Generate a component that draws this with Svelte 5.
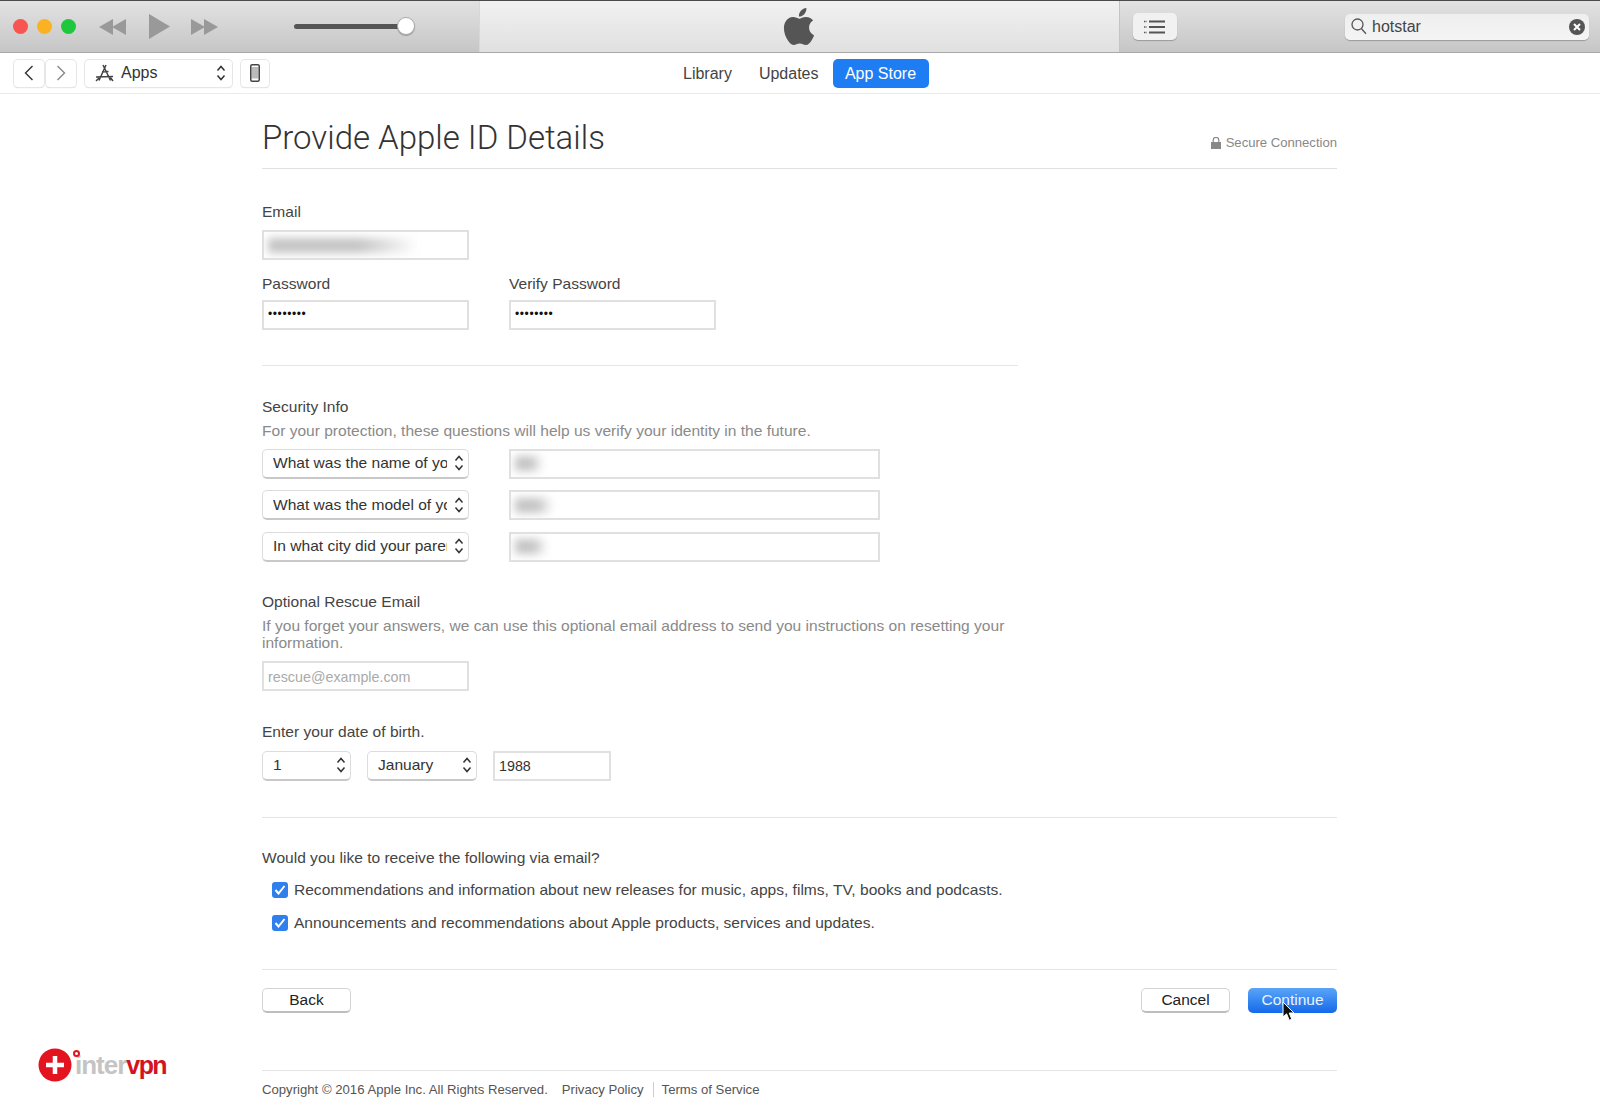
<script>
	const questions = [
		{ text: 'What was the name of your first pet?', blur: 28 },
		{ text: 'What was the model of your first car?', blur: 38 },
		{ text: 'In what city did your parents meet?', blur: 32 }
	];
	const newsletters = [
		'Recommendations and information about new releases for music, apps, films, TV, books and podcasts.',
		'Announcements and recommendations about Apple products, services and updates.'
	];
</script>

{#snippet updown()}
	<svg class="updown" width="10" height="18" viewBox="0 0 10 18" fill="none" stroke="#333" stroke-width="1.5">
		<path d="M1.5 6.5 5 2.5l3.5 4M1.5 11.5 5 15.5l3.5-4" />
	</svg>
{/snippet}

<div class="window">
	<!-- title bar -->
	<header class="titlebar">
		<div class="tb-left">
			<div class="lights">
				<span class="light red"></span>
				<span class="light amber"></span>
				<span class="light green"></span>
			</div>
			<svg class="transport rw" width="28" height="18" viewBox="0 0 28 18" fill="#999">
				<path d="M0 9 14 1v16zM13 9 27 1v16z" />
			</svg>
			<svg class="transport play" width="21" height="25" viewBox="0 0 21 25" fill="#999">
				<path d="M0 0 21 12.5 0 25z" />
			</svg>
			<svg class="transport ff" width="28" height="18" viewBox="0 0 28 18" fill="#999">
				<path d="M1 1 15 9 1 17zM14 1 28 9 14 17z" />
			</svg>
			<div class="volume"><span class="thumb"></span></div>
		</div>
		<div class="tb-center">
			<svg width="32" height="37" viewBox="2.5 0 19 24" fill="#555">
				<path d="M12.152 6.896c-.948 0-2.415-1.078-3.96-1.04-2.04.027-3.91 1.183-4.961 3.014-2.117 3.675-.546 9.103 1.519 12.09 1.013 1.454 2.208 3.09 3.792 3.039 1.52-.065 2.09-.987 3.935-.987 1.831 0 2.35.987 3.96.948 1.637-.026 2.676-1.48 3.676-2.948 1.156-1.688 1.636-3.325 1.662-3.415-.039-.013-3.182-1.221-3.22-4.857-.026-3.04 2.48-4.494 2.597-4.559-1.429-2.09-3.623-2.324-4.39-2.376-2-.156-3.675 1.09-4.61 1.09zM15.53 3.83c.843-1.012 1.4-2.427 1.245-3.83-1.207.052-2.662.805-3.532 1.818-.78.896-1.454 2.338-1.273 3.714 1.338.104 2.715-.688 3.559-1.701" />
			</svg>
		</div>
		<div class="tb-right">
			<button class="list-btn" type="button" aria-label="Up next">
				<svg width="22" height="14" viewBox="0 0 22 14" fill="none" stroke="#555">
					<path stroke-width="1.8" d="M5 1.5h16M5 7h16M5 12.5h16" />
					<path stroke-width="1.6" stroke-dasharray="1.5 1" d="M0 1.5h3M0 7h3M0 12.5h3" />
				</svg>
			</button>
			<div class="search">
				<svg width="16" height="17" viewBox="0 0 16 17" fill="none" stroke="#555" stroke-width="1.3">
					<circle cx="6.5" cy="6.5" r="5.5" />
					<path d="m10.5 10.8 4.5 5" />
				</svg>
				<span class="search-text">hotstar</span>
				<svg width="16" height="16" viewBox="0 0 16 16">
					<circle cx="8" cy="8" r="8" fill="#555" />
					<path d="m5 5 6 6M11 5l-6 6" stroke="#fff" stroke-width="2" />
				</svg>
			</div>
		</div>
	</header>

	<!-- nav row -->
	<nav class="navbar">
		<div class="nav-left">
			<button class="nav-btn arrow" type="button" aria-label="Back">
				<svg width="10" height="16" viewBox="0 0 10 16" fill="none" stroke="#333" stroke-width="1.4"><path d="M8.5 1 1.5 8l7 7" /></svg>
			</button>
			<button class="nav-btn arrow second" type="button" aria-label="Forward">
				<svg width="10" height="16" viewBox="0 0 10 16" fill="none" stroke="#888" stroke-width="1.4"><path d="m1.5 1 7 7-7 7" /></svg>
			</button>
			<div class="nav-btn apps">
				<svg width="19" height="18" viewBox="0 0 19 18" fill="none" stroke="#444" stroke-width="1.5">
					<path d="M4 16.5 11 1M8 1l7.5 15.5M1 13l17-.5M1 17l4-4M18 17l-3-4M7 8l6.5-.5" />
				</svg>
				<span class="apps-label">Apps</span>
				{@render updown()}
			</div>
			<button class="nav-btn device" type="button" aria-label="Device">
				<svg width="10" height="18" viewBox="0 0 10 18" fill="none" stroke="#444"><rect x="1.5" y="3" width="7" height="11.5" fill="#bbb" stroke="none" /><rect x=".75" y=".75" width="8.5" height="16.5" rx="1.5" stroke-width="1.5" /></svg>
			</button>
		</div>
		<div class="tabs">
			<span class="tab library">Library</span>
			<span class="tab updates">Updates</span>
			<span class="tab active">App Store</span>
		</div>
	</nav>

	<main class="page">
		<div class="heading">
			<h1>Provide Apple ID Details</h1>
			<span class="secure">
				<svg width="10" height="12" viewBox="0 0 10 12" fill="#888">
					<path d="M0 5h10v7H0z" />
					<path d="M2.2 5V3.2a2.8 2.8 0 0 1 5.6 0V5" fill="none" stroke="#888" stroke-width="1.2" />
				</svg>
				Secure Connection
			</span>
		</div>

		<!-- account -->
		<div class="label email-label">Email</div>
		<div class="field masked"><span class="smear" style="width: 150px"></span></div>
		<div class="pw-grid">
			<div>
				<div class="label">Password</div>
				<div class="field dots">••••••••</div>
			</div>
			<div>
				<div class="label">Verify Password</div>
				<div class="field dots">••••••••</div>
			</div>
		</div>
		<hr class="rule short" />

		<!-- security questions -->
		<div class="label sec-label">Security Info</div>
		<div class="hint">For your protection, these questions will help us verify your identity in the future.</div>
		<div class="questions">
			{#each questions as q}
				<div class="select question">
					<span class="select-text">{q.text}</span>
					{@render updown()}
				</div>
				<div class="field answer masked"><span class="smear" style="width: {q.blur}px"></span></div>
			{/each}
		</div>

		<div class="label rescue-label">Optional Rescue Email</div>
		<div class="hint rescue-hint">If you forget your answers, we can use this optional email address to send you instructions on resetting your information.</div>
		<div class="field placeholder">rescue@example.com</div>

		<div class="label dob-label">Enter your date of birth.</div>
		<div class="dob">
			<div class="select day"><span class="select-text">1</span>{@render updown()}</div>
			<div class="select month"><span class="select-text">January</span>{@render updown()}</div>
			<div class="field year">1988</div>
		</div>
		<hr class="rule dob-rule" />

		<div class="label mail-label">Would you like to receive the following via email?</div>
		<div class="checks">
			{#each newsletters as text}
				<div class="check-row">
					<span class="checkbox">
						<svg width="12" height="10" viewBox="0 0 12 10" fill="none" stroke="#fff" stroke-width="2"><path d="m1.5 5 3 3.5 6-7.5" /></svg>
					</span>
					<span>{text}</span>
				</div>
			{/each}
		</div>
		<hr class="rule checks-rule" />

		<div class="actions">
			<button class="btn" type="button">Back</button>
			<div class="actions-right">
				<button class="btn" type="button">Cancel</button>
				<button class="btn primary" type="button">Continue</button>
			</div>
		</div>
		<hr class="rule footer-rule" />

		<footer class="footer">
			<span>Copyright © 2016 Apple Inc. All Rights Reserved.</span>
			<span class="policy">Privacy Policy</span>
			<span class="terms">Terms of Service</span>
		</footer>
	</main>

	<!-- watermark -->
	<div class="logo">
		<svg width="34" height="34" viewBox="0 0 34 34">
			<circle cx="17" cy="17" r="16.5" fill="#e3141f" />
			<path d="M17 8v18M8 17h18" stroke="#fff" stroke-width="4.5" />
		</svg>
		<span class="logo-dot"></span>
		<span class="logo-inter">inter</span><span class="logo-vpn">vpn</span>
	</div>

	<!-- mouse pointer -->
	<svg class="cursor" width="13" height="21" viewBox="0 0 13 21">
		<path d="M1 1v15l3.6-3.2 2.6 6.4 2.6-1-2.6-6.2H12z" fill="#111" stroke="#fff" stroke-width="1" />
	</svg>
</div>

<style>
	:global(body) {
		background: #fff;
	}

	.window {
		position: relative;
		width: 1600px;
		height: 1114px;
		overflow: hidden;
		background: #fff;
		font-family: 'Liberation Sans', Arial, sans-serif;
		color: #444;
		font-size: 15.55px;
	}

	/* title bar */
	.titlebar {
		display: flex;
		height: 53px;
		box-sizing: border-box;
		border-top: 1px solid #4a4a4a;
		border-bottom: 1px solid #a8a8a8;
	}

	.tb-left,
	.tb-right {
		display: flex;
		align-items: center;
		background: linear-gradient(#e2e2e2, #c6c6c6);
	}

	.tb-left {
		width: 480px;
		border-right: 1px solid #d8d8d8;
		box-sizing: border-box;
		padding-left: 13px;
	}

	.tb-center {
		width: 639px;
		display: flex;
		align-items: center;
		justify-content: center;
		padding: 0 2px 1px 0;
		box-sizing: border-box;
		background: linear-gradient(#f1f1f1, #e0e0e0);
	}

	.tb-right {
		flex: 1;
		border-left: 1px solid #c4c4c4;
		padding-left: 13px;
	}

	.lights {
		display: flex;
		gap: 9px;
	}

	.light {
		width: 15px;
		height: 15px;
		border-radius: 50%;
	}

	.red { background: #f85450; }
	.amber { background: #fbb222; }
	.green { background: #1ec83c; }

	.transport.rw { margin-left: 23px; }
	.transport.play { margin-left: 22px; }
	.transport.ff { margin-left: 20px; }

	.volume {
		position: relative;
		margin-left: 76px;
		width: 113px;
		height: 5px;
		border-radius: 3px;
		background: #555;
	}

	.thumb {
		position: absolute;
		right: -8px;
		top: -7px;
		width: 18px;
		height: 18px;
		box-sizing: border-box;
		border-radius: 50%;
		background: #fff;
		border: 1px solid #aaa;
		box-shadow: 0 1px 1px rgba(0, 0, 0, 0.25);
	}

	.list-btn {
		width: 44px;
		height: 27px;
		padding: 0;
		display: flex;
		align-items: center;
		justify-content: center;
		border: none;
		border-radius: 5px;
		background: #f1f1f1;
		box-shadow: 0 1px 1px rgba(0, 0, 0, 0.25);
	}

	.search {
		margin-left: 168px;
		width: 244px;
		height: 26px;
		box-sizing: border-box;
		display: flex;
		align-items: center;
		padding: 0 4px 0 6px;
		border-radius: 5px;
		background: linear-gradient(#efefef, #f4f4f4);
		box-shadow: 0 1px 1px rgba(0, 0, 0, 0.25);
	}

	.search-text {
		flex: 1;
		margin-left: 5px;
		font-size: 16px;
		color: #444;
	}

	/* nav row */
	.navbar {
		position: relative;
		display: flex;
		justify-content: space-between;
		align-items: center;
		height: 41px;
		box-sizing: border-box;
		border-bottom: 1px solid #ececec;
	}

	.nav-left {
		display: flex;
		align-items: center;
		padding-left: 14px;
	}

	.nav-btn {
		display: flex;
		align-items: center;
		height: 27px;
		box-sizing: border-box;
		padding: 0;
		border: none;
		border-radius: 4px;
		background: #fff;
		box-shadow: 0 0 0 1px #e6e6e6, 0 1px 1px rgba(0, 0, 0, 0.2);
	}

	.nav-btn.arrow {
		width: 30px;
		justify-content: center;
	}

	.nav-btn.second { margin-left: 2px; }

	.nav-btn.apps {
		width: 147px;
		margin-left: 9px;
		padding: 0 6px 0 10px;
		color: #333;
	}

	.apps-label {
		flex: 1;
		margin-left: 7px;
		font-size: 16px;
	}

	.nav-btn.device {
		width: 28px;
		margin-left: 9px;
		justify-content: center;
	}

	.tabs {
		position: absolute;
		left: 683px;
		top: 6px;
		display: flex;
		align-items: center;
		height: 29px;
		font-size: 16px;
		color: #444;
	}

	.tab.updates { margin-left: 27px; }

	.tab.active {
		margin-left: 14px;
		width: 96px;
		height: 29px;
		line-height: 29px;
		text-align: center;
		border-radius: 5px;
		background: #1f7df3;
		color: #fff;
	}

	/* page */
	.page {
		width: 1075px;
		margin-left: 262px;
	}

	.heading {
		display: flex;
		justify-content: space-between;
		align-items: flex-end;
		padding: 24px 0 10px;
		border-bottom: 1px solid #e0e0e0;
	}

	h1 {
		margin: 0;
		font-family: Roboto, 'Liberation Sans', sans-serif;
		font-weight: 300;
		font-size: 33px;
		line-height: 40px;
		color: #333;
	}

	.secure {
		display: flex;
		align-items: center;
		gap: 5px;
		font-size: 13.1px;
		line-height: 16px;
		margin-bottom: 7px;
		color: #888;
	}

	.label {
		line-height: 20px;
		height: 20px;
		color: #444;
	}

	.email-label { margin-top: 33px; margin-bottom: 8px; }

	.field {
		display: flex;
		align-items: center;
		width: 207px;
		height: 30px;
		box-sizing: border-box;
		padding: 0 4px;
		border: 2px solid #e0e0e0;
		color: #333;
		font-size: 14.3px;
		overflow: hidden;
	}

	.smear {
		display: block;
		height: 15px;
		background: linear-gradient(to right, #c4c4c4 60%, rgba(196, 196, 196, 0));
		filter: blur(4px);
	}

	.pw-grid {
		display: flex;
		gap: 40px;
		margin-top: 14px;
	}

	.pw-grid .label { margin-bottom: 6px; }

	.dots {
		font-size: 12px;
		color: #111;
		letter-spacing: 0.6px;
		padding-bottom: 2px;
	}

	.rule {
		height: 1px;
		margin: 0;
		border: none;
		background: #e4e4e4;
	}

	.rule.short { width: 756px; margin-top: 35px; }

	.hint {
		color: #8a8a8a;
		line-height: 17.5px;
		margin-top: 5px;
	}

	.sec-label { margin-top: 31px; }

	.questions {
		display: grid;
		grid-template-columns: 207px 371px;
		gap: 11.5px 40px;
		margin-top: 9px;
	}

	.select {
		display: flex;
		align-items: center;
		height: 30px;
		box-sizing: border-box;
		padding: 0 4px 0 10px;
		border: 1px solid #dcdcdc;
		border-bottom: 2px solid #c8c8c8;
		border-radius: 5px;
		color: #333;
		background: #fff;
	}

	.select-text {
		flex: 1;
		overflow: hidden;
		white-space: nowrap;
	}

	.updown { flex: none; margin-left: 7px; }

	.answer { width: 371px; }

	.rescue-label { margin-top: 30px; }

	.rescue-hint { width: 745px; margin-top: 5px; }

	.placeholder {
		margin-top: 9px;
		padding-top: 2px;
		color: #aaa;
	}

	.dob-label { margin-top: 31px; }

	.dob {
		display: flex;
		margin-top: 9px;
	}

	.day { width: 89px; }

	.month { width: 110px; margin-left: 16px; }

	.year { width: 118px; margin-left: 16px; }

	.rule.dob-rule { margin-top: 36px; }

	.mail-label { margin-top: 30px; }

	.checks {
		display: flex;
		flex-direction: column;
		gap: 13px;
		margin-top: 12px;
	}

	.check-row {
		display: flex;
		align-items: center;
		height: 20px;
		padding-left: 10px;
		gap: 6px;
		color: #444;
	}

	.checkbox {
		display: flex;
		align-items: center;
		justify-content: center;
		width: 16px;
		height: 16px;
		border-radius: 3px;
		background: #2f80ed;
	}

	.rule.checks-rule { margin-top: 36px; }

	.actions {
		display: flex;
		justify-content: space-between;
		margin-top: 18px;
	}

	.actions-right {
		display: flex;
		gap: 18px;
	}

	.btn {
		width: 89px;
		height: 25px;
		padding: 0;
		box-sizing: border-box;
		font-family: inherit;
		font-size: 15.5px;
		color: #222;
		background: #fff;
		border: 1px solid #d4d4d4;
		border-bottom: 2px solid #bdbdbd;
		border-radius: 5px;
	}

	.btn.primary {
		background: linear-gradient(#5aa5f8, #1469ea);
		border: none;
		color: #e8f2ff;
	}

	.rule.footer-rule { margin-top: 57px; }

	.footer {
		display: flex;
		align-items: center;
		margin-top: 10px;
		height: 18px;
		font-size: 13.15px;
		color: #555;
	}

	.policy { margin-left: 14px; }

	.terms {
		margin-left: 9px;
		padding-left: 8px;
		border-left: 1px solid #ccc;
	}

	/* overlays */
	.logo {
		position: absolute;
		left: 38px;
		top: 1048px;
		display: flex;
		align-items: center;
		font-family: 'Liberation Sans', sans-serif;
		font-weight: 700;
		font-size: 26px;
		height: 34px;
	}

	.logo-dot {
		position: absolute;
		left: 35px;
		top: 2px;
		width: 7px;
		height: 7px;
		box-sizing: border-box;
		border-radius: 50%;
		border: 2px solid #e3141f;
	}

	.logo-inter {
		margin-left: 3px;
		color: #c4c4c4;
		letter-spacing: -1px;
	}

	.logo-vpn {
		color: #d3141e;
		font-size: 25px;
		letter-spacing: -1.6px;
	}

	.cursor {
		position: absolute;
		left: 1282px;
		top: 1001px;
	}
</style>
